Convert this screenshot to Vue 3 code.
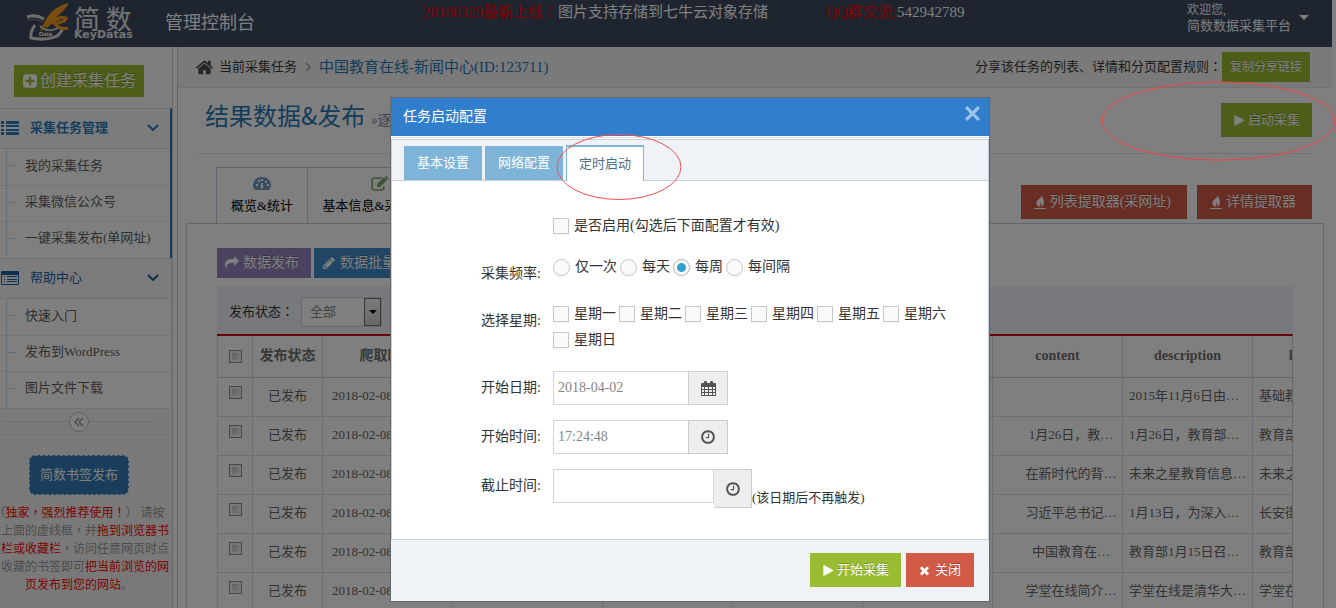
<script setup>
import { ref } from 'vue'

const PLAY = 'M1576 927l-1328 738q-23 13-39.5 3t-16.5-36v-1472q0-26 16.5-36t39.5 3l1328 738q23 13 23 31t-23 31z'
const PLUS = 'M1408 960v-128q0-26-19-45t-45-19h-320v-320q0-26-19-45t-45-19h-128q-26 0-45 19t-19 45v320h-320q-26 0-45 19t-19 45v128q0 26 19 45t45 19h320v320q0 26 19 45t45 19h128q26 0 45-19t19-45v-320h320q26 0 45-19t19-45zm256-544v960q0 119-84.5 203.5t-203.5 84.5h-960q-119 0-203.5-84.5t-84.5-203.5v-960q0-119 84.5-203.5t203.5-84.5h960q119 0 203.5 84.5t84.5 203.5z'
const TIMES = 'M1490 1322q0 40-28 68l-136 136q-28 28-68 28t-68-28l-294-294-294 294q-28 28-68 28t-68-28l-136-136q-28-28-28-68t28-68l294-294-294-294q-28-28-28-68t28-68l136-136q28-28 68-28t68 28l294 294 294-294q28-28 68-28t68 28l136 136q28 28 28 68t-28 68l-294 294 294 294q28 28 28 68z'
const HOME = 'M1472 992v480q0 26-19 45t-45 19h-384v-384h-256v384h-384q-26 0-45-19t-19-45v-480q0-1 .5-3t.5-3l575-474 575 474q1 2 1 6zm223-69l-62 74q-8 9-21 11h-3q-13 0-21-7l-692-577-692 577q-12 8-24 7-13-2-21-11l-62-74q-8-10-7-23.5t11-21.5l719-599q32-26 76-26t76 26l244 204v-195q0-14 9-23t23-9h192q14 0 23 9t9 23v408l219 182q10 8 11 21.5t-7 23.5z'
const CLOCK = 'M1024 544v448q0 14-9 23t-23 9h-320q-14 0-23-9t-9-23v-64q0-14 9-23t23-9h224v-352q0-14 9-23t23-9h64q14 0 23 9t9 23zm416 352q0-148-73-273t-198-198-273-73-273 73-198 198-73 273 73 273 198 198 273 73 273-73 198-198 73-273zm224 0q0 209-103 385.5t-279.5 279.5-385.5 103-385.5-103-279.5-279.5-103-385.5 103-385.5 279.5-279.5 385.5-103 385.5 103 279.5 279.5 103 385.5z'
const SHARE = 'M1792 640q0 26-19 45l-512 512q-19 19-45 19t-45-19-19-45v-256h-224q-98 0-175.5 6t-154 21.5-133 42.5-105.5 69.5-80 101-48.5 138.5-17.5 181q0 55 5 123 0 6 2.5 23.5t2.5 26.5q0 15-8.5 25t-23.5 10q-16 0-28-17-7-9-13-22t-13.5-30-10.5-24q-127-285-127-451 0-199 53-333 162-403 875-403h224v-256q0-26 19-45t45-19 45 19l512 512q19 19 19 45z'
const PENCIL = 'M491 1536l91-91-235-235-91 91v107h128v128h107zm523-928q0-22-22-22-10 0-17 7l-542 542q-7 7-7 17 0 22 22 22 10 0 17-7l542-542q7-7 7-17zm-54-192l416 416-832 832h-416v-416zm683 96q0 53-37 90l-166 166-416-416 166-165q36-38 90-38 53 0 91 38l235 234q37 39 37 91z'

const menus = [
  { title: '采集任务管理', active: true, items: ['我的采集任务', '采集微信公众号', '一键采集发布(单网址)'] },
  { title: '帮助中心', active: false, items: ['快速入门', '发布到WordPress', '图片文件下载'] }
]

const rows = [
  { content: '', description: '2015年11月6日由…', keywords: '基础教育' },
  { content: '1月26日，教…', description: '1月26日，教育部…', keywords: '教育部' },
  { content: '在新时代的背…', description: '未来之星教育信息…', keywords: '未来之星' },
  { content: '习近平总书记…', description: '1月13日，为深入…', keywords: '长安街' },
  { content: '中国教育在…', description: '教育部1月15日召…', keywords: '教育部' },
  { content: '学堂在线简介…', description: '学堂在线是清华大…', keywords: '学堂在线' }
]

const tabs = ['基本设置', '网络配置', '定时启动']
const activeTab = ref('定时启动')
const frequencies = ['仅一次', '每天', '每周', '每间隔']
const frequency = ref('每周')
const weekdays = ['星期一', '星期二', '星期三', '星期四', '星期五', '星期六', '星期日']
const chosenDays = ref([])
const enabled = ref(false)
const startDate = ref('2018-04-02')
const startTime = ref('17:24:48')
const endTime = ref('')
</script>

<template>
  <div class="page">
    <header class="topbar">
      <a class="brand" href="#">
        <svg class="brand-mark" viewBox="0 0 46 40" aria-hidden="true">
          <path d="M1 14 Q10 11 18 16" fill="none" stroke="#d8d8d8" stroke-width="3" />
          <path d="M1 17 Q10 15 17 19" fill="none" stroke="#8d8d8d" stroke-width="1" />
          <path d="M9 22 Q4 29 5 35 Q20 38 31 33 Q36 29 37 24" fill="none" stroke="#dcdcdc" stroke-width="3" />
          <path d="M14 23 Q22 31 34 24" fill="none" stroke="#cfcfcf" stroke-width="2" />
          <path d="M42 0 Q27 4 21 15 Q16 23 14 29 Q19 24 23 19 Q35 12 42 2 Z" fill="#f79a1d" />
          <path d="M23 19 Q33 13 40 15 Q41 18 29 21 Q34 27 42 25 M20 24 Q26 17 34 16" fill="none" stroke="#f79a1d" stroke-width="3" />
          <text x="13" y="33" class="brand-data">Data</text>
        </svg>
        <span class="brand-words"><b>简 数</b><i>KeyDatas</i></span>
      </a>
      <span class="console">管理控制台</span>
      <p class="notice"><span>20180329最新上线<em class="mark">：</em></span>图片支持存储到七牛云对象存储</p>
      <p class="qq"><span>QQ群交流:</span>542942789</p>
      <button class="user" type="button">
        <span><small>欢迎您,</small>简数数据采集平台</span>
        <i class="caret"></i>
      </button>
    </header>

    <div class="columns">
      <aside class="sidebar">
        <div class="create">
          <button type="button" class="btn green create-btn">
            <svg class="i16" viewBox="0 0 1792 1792"><path :d="PLUS" /></svg>创建采集任务
          </button>
        </div>
        <nav>
          <section v-for="m in menus" :key="m.title" :class="['menu', { open: m.active }]">
            <a class="menu-head" href="#">
              <svg v-if="m.active" class="menu-icon" viewBox="0 0 18 14"><path d="M0 0h3v3H0zM5 0h13v3H5zM0 4h3v2H0zM5 4h13v2H5zM0 8h3v2H0zM5 8h13v2H5zM0 11h3v3H0zM5 11h13v3H5z" /></svg>
              <svg v-else class="menu-icon" viewBox="0 0 18 14"><path fill-rule="evenodd" d="M1 0h16q1 0 1 1v12q0 1-1 1H1q-1 0-1-1V1q0-1 1-1zM1 4v9h16V4zM3 5h1v1H3zM6 5h10v1H6zM3 8h1v1H3zM6 8h10v1H6zM3 10h1v1H3zM6 10h10v1H6z" /></svg>
              <span>{{ m.title }}</span>
              <svg class="angle" viewBox="0 0 12 8"><path d="M1 1l5 5 5-5" fill="none" stroke="currentColor" stroke-width="2" /></svg>
            </a>
            <ul>
              <li v-for="item in m.items" :key="item"><a href="#">{{ item }}</a></li>
            </ul>
          </section>
        </nav>
        <div class="collapse">
          <button type="button" aria-label="收起菜单">
            <svg viewBox="0 0 10 10"><path d="M5 1L1 5l4 4M9 1L5 5l4 4" fill="none" stroke="#999" stroke-width="1.5" /></svg>
          </button>
        </div>
        <a class="bookmark" href="#">简数书签发布</a>
        <p class="tip">（<b>独家<em class="mark">，</em>强烈推荐使用<em class="mark">！</em></b>） 请按住上面的虚线框<em class="mark">，</em>并<b>拖到浏览器书签栏或收藏栏</b><em class="mark">，</em>访问任意网页时点击收藏的书签即可<b>把当前浏览的网页发布到您的网站</b>。</p>
      </aside>

      <main class="main">
        <div class="crumbs">
          <svg class="home" viewBox="0 0 1792 1792"><path :d="HOME" /></svg>
          <span>当前采集任务</span>
          <svg class="crumb-sep" viewBox="0 0 6 8"><path d="M1 0l4 4-4 4" fill="none" stroke="#999" stroke-width="1.5" /></svg>
          <a href="#">中国教育在线-新闻中心(ID:123711)</a>
          <span class="share-label">分享该任务的列表、详情和分页配置规则<em class="mark">：</em></span>
          <button type="button" class="btn green share-btn">复制分享链接</button>
        </div>

        <div class="title-row">
          <h1>结果数据&amp;发布 <small>»逐条查看</small></h1>
          <button type="button" class="btn green start-btn">
            <svg class="i13" viewBox="0 0 1792 1792"><path :d="PLAY" /></svg>启动采集
          </button>
        </div>

        <div class="tab-row">
          <a class="page-tab" href="#">
            <svg viewBox="0 0 18 14"><path fill="#7399c2" fill-rule="evenodd" d="M2 13Q0 11 0 8Q1 0 9 0t9 8q0 3-2 5zM3 7v2h2V7zM5 3v2h2V3zM8 2v2h2V2zM12 4v2h2V4zM14 7v2h2V7zM8 6L8 9Q7 10 8 11t2 0q1-1 0-2L10 6z" /></svg>
            概览&amp;统计
          </a>
          <a class="page-tab wide" href="#">
            <svg viewBox="0 0 18 14"><path d="M11 1H4Q1 1 1 4v6q0 3 3 3h6q3 0 3-3V9" fill="none" stroke="#74a562" stroke-width="1.5" /><path fill="#74a562" d="M6 10V7l7-7 3 3-7 7zM14 0l1-1 3 3-1 1z" /></svg>
            基本信息&amp;采集配置
          </a>
          <div class="extract">
            <button type="button" class="btn red">
              <svg class="fire" viewBox="0 0 12 14"><path d="M7 0Q8 2 5 4Q1 7 3 10q1 2 3 2Q5 10 7 8q1 2 0 4q3-1 3-5Q10 3 7 0zM0 13h12v1H0z" /></svg>列表提取器(采网址)
            </button>
            <button type="button" class="btn red">
              <svg class="fire" viewBox="0 0 12 14"><path d="M7 0Q8 2 5 4Q1 7 3 10q1 2 3 2Q5 10 7 8q1 2 0 4q3-1 3-5Q10 3 7 0zM0 13h12v1H0z" /></svg>详情提取器
            </button>
          </div>
        </div>

        <section class="panel">
          <div class="actions">
            <button type="button" class="btn purple"><svg class="i14" viewBox="0 0 1792 1792"><path :d="SHARE" /></svg>数据发布</button>
            <button type="button" class="btn blue"><svg class="i14" viewBox="0 0 1792 1792"><path :d="PENCIL" /></svg>数据批量修改</button>
          </div>
          <div class="filter">
            <label for="state">发布状态<em class="mark">：</em></label>
            <span class="select">
              <select id="state"><option>全部</option></select>
              <i><svg viewBox="0 0 8 4"><path d="M0 0h8L4 4z" /></svg></i>
            </span>
          </div>
          <div class="table-wrap">
            <table>
              <colgroup><col class="c-check"><col class="c-state"><col class="c-std"><col class="c-wide"><col class="c-std" span="6"></colgroup>
              <thead>
                <tr>
                  <th><input type="checkbox" class="old-check" aria-label="全选"></th>
                  <th>发布状态</th><th>爬取时间</th><th></th><th></th><th></th><th></th>
                  <th>content</th><th>description</th><th>keywords</th>
                </tr>
              </thead>
              <tbody>
                <tr v-for="(r, i) in rows" :key="i">
                  <td class="pick"><input type="checkbox" class="old-check" :aria-label="'选择第' + (i + 1) + '行'"></td>
                  <td class="mid">已发布</td><td class="date">2018-02-08</td><td></td><td></td><td></td><td></td>
                  <td class="content">{{ r.content }}</td><td>{{ r.description }}</td><td>{{ r.keywords }}</td>
                </tr>
              </tbody>
            </table>
          </div>
        </section>
      </main>
    </div>

    <div class="backdrop">
      <div class="dialog" role="dialog" aria-labelledby="dialog-title">
        <div class="dialog-head">
          <h2 id="dialog-title">任务启动配置</h2>
          <button type="button" aria-label="关闭窗口"><svg viewBox="0 0 14 14"><path d="M1 1l12 12M13 1L1 13" fill="none" stroke="currentColor" stroke-width="3" /></svg></button>
        </div>
        <div class="dialog-tabs">
          <button v-for="t in tabs" :key="t" type="button" :class="{ active: t === activeTab }" @click="activeTab = t">
            {{ t }}
            <svg v-if="t === '定时启动'" class="ring-tab" viewBox="0 0 126 68"><ellipse cx="63" cy="34" rx="62" ry="32.5" fill="none" stroke="#f25050" /></svg>
          </button>
        </div>
        <form class="dialog-body" @submit.prevent>
          <div class="row enable">
            <label class="opt"><input v-model="enabled" type="checkbox">是否启用(勾选后下面配置才有效)</label>
          </div>
          <fieldset class="row freq">
            <legend>采集频率:</legend>
            <div class="opts">
              <label v-for="f in frequencies" :key="f" class="opt"><input v-model="frequency" type="radio" name="frequency" :value="f">{{ f }}</label>
            </div>
          </fieldset>
          <fieldset class="row week">
            <legend>选择星期:</legend>
            <div class="opts">
              <label v-for="d in weekdays" :key="d" class="opt"><input v-model="chosenDays" type="checkbox" :value="d">{{ d }}</label>
            </div>
          </fieldset>
          <div class="row field">
            <label for="start-date">开始日期:</label>
            <input id="start-date" v-model="startDate" type="text">
            <button type="button" class="addon" aria-label="选择日期">
              <svg class="cal" viewBox="0 0 15 15"><path fill-rule="evenodd" d="M1 2h2V1q0-1 1-1h1q1 0 1 1v1h3V1q0-1 1-1h1q1 0 1 1v1h2q1 0 1 1v11q0 1-1 1H1q-1 0-1-1V3q0-1 1-1zM1 6v2h2V6zM4 6v2h3V6zM8 6v2h3V6zM12 6v2h2V6zM1 9v2h2V9zM4 9v2h3V9zM8 9v2h3V9zM12 9v2h2V9zM1 12v2h2v-2zM4 12v2h3v-2zM8 12v2h3v-2zM12 12v2h2v-2z" /></svg>
            </button>
          </div>
          <div class="row field">
            <label for="start-time">开始时间:</label>
            <input id="start-time" v-model="startTime" type="text">
            <button type="button" class="addon" aria-label="选择时间"><svg class="i16" viewBox="0 0 1792 1792"><path :d="CLOCK" /></svg></button>
          </div>
          <div class="row field end">
            <label for="end-time">截止时间:</label>
            <input id="end-time" v-model="endTime" type="text">
            <button type="button" class="addon" aria-label="选择截止时间"><svg class="i16" viewBox="0 0 1792 1792"><path :d="CLOCK" /></svg></button>
            <span class="hint">(该日期后不再触发)</span>
          </div>
        </form>
        <div class="dialog-foot">
          <button type="button" class="btn green"><svg class="i13" viewBox="0 0 1792 1792"><path :d="PLAY" /></svg>开始采集</button>
          <button type="button" class="btn red close"><svg class="i13" viewBox="0 0 1792 1792"><path :d="TIMES" /></svg>关闭</button>
        </div>
      </div>
      <svg class="ring-start" viewBox="0 0 235 80"><ellipse cx="117.5" cy="40" rx="116.5" ry="39" fill="none" stroke="#f24444" /></svg>
    </div>
  </div>
</template>

<style>
body {
  margin: 0;
  background: #fff;
}
</style>

<style scoped>
.page,
.page * {
  box-sizing: border-box;
}
.page {
  height: 100vh;
  overflow: hidden;
  display: flex;
  flex-direction: column;
  padding-right: 4px;
  color: #393939;
  font: 13px/20px "Liberation Serif", "Noto Sans CJK SC", serif;
  text-spacing-trim: space-all;
}
.page button,
.page input,
.page select {
  font: inherit;
  margin: 0;
}
.page p,
.page ul,
.page h1,
.page h2 {
  margin: 0;
  padding: 0;
}
a {
  text-decoration: none;
  color: inherit;
}
svg {
  fill: currentColor;
  flex: none;
}
.mark {
  font-family: "Noto Sans CJK TC", sans-serif;
  font-style: normal;
  line-height: 1;
}
.i13 { width: 13px; height: 13px; }
.i14 { width: 14px; height: 14px; }
.i16 { width: 16px; height: 16px; }

.btn {
  display: inline-flex;
  align-items: center;
  justify-content: center;
  gap: 2px;
  border: 0;
  padding: 0 12px;
  height: 34px;
  color: #fff;
  white-space: nowrap;
  text-shadow: 0 -1px 0 rgba(0, 0, 0, .25);
}
.page .green { background: #9abc32; }
.page .red { background: #d15b47; }
.page .purple { background: #9585bf; }
.page .blue { background: #428bca; }

/* top bar */
.topbar {
  flex: none;
  height: 47px;
  display: flex;
  background: #3c4a5e;
  color: #fff;
  font-size: 15px;
}
.brand {
  display: flex;
  margin-left: 26px;
  width: 139px;
}
.brand-mark {
  width: 46px;
  height: 40px;
  margin-top: 3px;
}
.brand-data {
  font: bold 6px "Liberation Sans", sans-serif;
  fill: #fff;
}
.brand-words {
  display: flex;
  flex-direction: column;
  margin: 6px 0 0 2px;
}
.brand-words b {
  font: 26px/24px "Noto Sans CJK SC", sans-serif;
  color: #e6e6e6;
  white-space: nowrap;
}
.brand-words i {
  font: bold 11px/10px "DejaVu Sans", sans-serif;
  color: #e6e6e6;
}
.console {
  font-size: 18px;
  line-height: 46px;
}
.page .notice {
  margin-left: 168px;
  line-height: 24px;
}
.page .qq {
  margin-left: 58px;
  line-height: 24px;
}
.notice span,
.qq span {
  color: #f00;
}
.user {
  display: flex;
  align-items: center;
  gap: 8px;
  border: 0;
  background: none;
  color: #fff;
  text-align: left;
  padding: 0;
}
.page .user {
  margin: 0 23px 12px auto;
  font-size: 13px;
  line-height: 16px;
}
.user small {
  display: block;
  font-size: 12px;
}
.caret {
  border: 5px solid transparent;
  border-top-color: #fff;
  border-bottom: 0;
}

.columns {
  flex: 1;
  display: flex;
  min-height: 0;
}

/* sidebar */
.sidebar {
  flex: 0 0 173px;
  background: #f2f2f2;
  border-right: 1px solid #ccc;
  overflow: hidden;
}
.create {
  height: 61px;
  padding: 18px 14px;
  background: #fafafa;
  width: 172px;
}
.page .create-btn {
  width: 130px;
  height: 32px;
  font-size: 16px;
  padding: 0;
  gap: 2px;
}
.menu {
  border-top: 1px solid #e0e0e0;
  border-right: 2px solid #f2f2f2;
}
.menu.open {
  border-right-color: #2b7dbc;
}
.menu-head {
  display: flex;
  align-items: center;
  height: 39px;
  padding: 0 11px 1px 1px;
  background: #f9f9f9;
  color: #1f62a3;
}
.menu.open .menu-head {
  color: #2b7dbc;
  font-weight: bold;
}
.menu-icon {
  width: 18px;
  height: 14px;
}
.menu-head span {
  margin-left: 11px;
}
.angle {
  width: 12px;
  height: 8px;
  margin-left: auto;
}
.page .menu ul {
  list-style: none;
  position: relative;
  border-top: 1px solid #e0e0e0;
  background: #fff;
  padding-bottom: 1px;
}
.menu ul::before {
  content: "";
  position: absolute;
  left: 6px;
  top: 0;
  bottom: 0;
  border-left: 1px dotted #9dbdd6;
}
.menu li {
  display: flex;
  align-items: center;
  height: 36px;
  padding-bottom: 3px;
}
.menu li + li {
  border-top: 1px dotted #dedede;
}
.menu li::before {
  content: "";
  width: 7px;
  margin: 0 10px 0 8px;
  border-top: 1px dotted #9dbdd6;
}
.menu li a {
  color: #616161;
}
.collapse {
  height: 27px;
  border: 1px solid #e0e0e0;
  border-width: 1px 0;
  background: #f5f5f5;
  margin-right: 2px;
  display: flex;
  align-items: center;
  padding: 0 15px 0 3px;
}
.collapse::before,
.collapse::after {
  content: "";
  flex: 1;
  border-top: 1px solid #d6d6d6;
}
.collapse button {
  width: 20px;
  height: 20px;
  border: 1px solid #bbb;
  border-radius: 50%;
  background: #fff;
  display: grid;
  place-items: center;
  padding: 0;
}
.collapse svg {
  width: 10px;
  height: 10px;
}
.bookmark {
  display: block;
  width: 100px;
  margin: 20px 0 9px 29px;
  border: 1px dashed #d0e4f4;
  border-radius: 6px;
  background: #337ab7;
  color: #fff;
  text-align: center;
  line-height: 38px;
}
.page .tip {
  margin: 0 2px 0 -12px;
  font-size: 12px;
  line-height: 18px;
  text-align: center;
  color: #999;
}
.tip b {
  color: #f00;
  font-weight: normal;
}

/* main */
.main {
  flex: 1;
  min-width: 0;
  margin-left: 4px;
  border-left: 1px solid #ccc;
  background: #fff;
}
.crumbs {
  height: 41px;
  display: flex;
  align-items: center;
  background: #f5f5f5;
  border-bottom: 1px solid #e5e5e5;
  padding: 0 22px 0 17px;
}
.home {
  width: 19px;
  height: 19px;
  margin-right: 5px;
  color: #4c4c4c;
}
.crumb-sep {
  width: 6px;
  height: 8px;
  margin: 0 8px;
}
.crumbs a {
  font-size: 15px;
  color: #2679b5;
}
.share-label {
  margin-left: auto;
}
.page .share-btn {
  height: 30px;
  padding: 0 8px;
  font-size: 12px;
}
.title-row {
  display: flex;
  justify-content: space-between;
  align-items: flex-start;
  margin: 0 20px 0 21px;
  padding: 15px 0 0 6px;
  height: 66px;
  border-bottom: 1px dotted #ccc;
}
h1 {
  font: 24px/24px "Noto Sans CJK SC", sans-serif;
  color: #2679b5;
}
h1 small {
  font-size: 14px;
  color: #8089a0;
}
.tab-row {
  display: flex;
  height: 69px;
  padding: 13px 20px 0 38px;
}
.page-tab {
  display: flex;
  flex-direction: column;
  align-items: center;
  width: 92px;
  padding-top: 9px;
  gap: 5px;
  border: 1px solid #c5d0dc;
  border-width: 1px 1px 0;
  color: #000;
  white-space: nowrap;
}
.page-tab.wide {
  width: 145px;
  margin-left: -1px;
}
.page-tab svg {
  width: 18px;
  height: 14px;
  overflow: visible;
}
.extract {
  margin-left: auto;
  display: flex;
  gap: 10px;
  padding-top: 18px;
}
.page .extract .btn {
  font-size: 14px;
  padding: 0 16px 0 13px;
  gap: 4px;
}
.fire {
  width: 12px;
  height: 14px;
}
.panel {
  margin: 0 8px;
  border: 1px solid #c5d0dc;
  padding: 24px 30px;
}
.actions {
  display: flex;
  gap: 3px;
}
.page .actions .btn {
  height: 30px;
  padding: 0 8px;
  font-size: 14px;
  gap: 4px;
}
.page .actions .purple {
  padding-right: 12px;
}
.filter {
  display: flex;
  align-items: center;
  height: 48px;
  margin-top: 8px;
  padding: 4px 12px 0;
  background: #eff3f8;
}
.select {
  position: relative;
  margin-left: 7px;
}
.filter select {
  appearance: none;
  display: block;
  width: 81px;
  height: 30px;
  padding: 0 8px;
  border: 1px solid #d5d5d5;
  border-radius: 0;
  background: #fff;
  color: #858585;
}
.select i {
  position: absolute;
  top: 1px;
  right: 1px;
  width: 17px;
  height: 28px;
  border: 1px solid #707070;
  background: linear-gradient(#f4f4f4, #d0d0d0);
  display: grid;
  place-items: center;
  pointer-events: none;
}
.select svg {
  width: 8px;
  height: 4px;
  fill: #000;
}
.table-wrap {
  overflow: hidden;
  border-top: 2px solid #c00;
  border-right: 1px solid #ccc;
}
table {
  table-layout: fixed;
  width: 1166px;
  border-collapse: collapse;
}
.c-check { width: 35px; }
.c-state { width: 70px; }
.c-std { width: 130px; }
.c-wide { width: 150px; }
th,
td {
  border: 1px solid #dadde8;
  padding: 0 6px;
  height: 39px;
  text-align: left;
  white-space: nowrap;
  overflow: hidden;
}
th {
  height: 41px;
  border-top: 0;
  border-bottom-color: #ccc;
  text-align: center;
  font-size: 14px;
  padding: 0;
  color: #707070;
}
td {
  color: #666;
  padding-bottom: 1px;
}
td.mid {
  text-align: center;
  padding: 0 0 1px;
}
td.pick {
  vertical-align: top;
  padding: 8px 0 0;
}
td.date {
  padding-left: 9px;
}
td.content {
  text-align: center;
  padding: 0 4px 1px 31px;
}
.old-check {
  appearance: none;
  display: block;
  width: 13px;
  height: 13px;
  border: 1px solid #8e8f8f;
  background: linear-gradient(135deg, #b5b9be, #f4f4f4);
  box-shadow: inset 0 0 0 2px #f0f0f0;
}
.page .old-check {
  margin: 0 auto;
}

/* dialog */
.backdrop {
  position: fixed;
  inset: 0;
  display: flex;
  justify-content: center;
  align-items: flex-start;
  padding: 97px 0 0 44px;
  background: rgba(0, 0, 0, .5);
}
.dialog {
  width: 600px;
  border: 1px solid #666;
  background: #fff;
}
.dialog-head {
  display: flex;
  align-items: center;
  justify-content: space-between;
  height: 38px;
  padding: 0 9px 0 12px;
  background: #307ecc;
  color: #fff;
}
h2 {
  font-size: 14px;
  font-weight: normal;
}
.dialog-head button {
  border: 0;
  background: none;
  padding: 0;
  height: 24px;
  color: #9cc4ea;
}
.dialog-head svg {
  display: block;
  width: 15px;
  height: 15px;
  margin-bottom: 8px;
}
.dialog-tabs {
  display: flex;
  gap: 3px;
  height: 42px;
  margin-top: 3px;
  padding: 6px 12px 0;
  background: #eff3f8;
  border: 1px solid #c5d0dc;
  box-shadow: 0 -2px 0 -1px #fff, 0 -3px 0 -1px #e0e0e0;
}
.dialog-tabs button {
  position: relative;
  width: 78px;
  height: 34px;
  padding: 0;
  border: 0;
  background: #7db4d8;
  color: #fff;
}
.page .dialog-tabs .active {
  height: 36px;
  margin-top: -1px;
  border: 1px solid #7db4d8;
  border-width: 2px 1px 0;
  background: #fff;
  color: #4c6f8c;
}
.ring-tab {
  position: absolute;
  left: -11px;
  top: -14px;
  width: 126px;
  height: 68px;
  pointer-events: none;
}
.dialog-body {
  height: 359px;
  padding: 32px 20px 0 70px;
  border: 1px solid #c5d0dc;
  border-top: 0;
  font-size: 14px;
  color: #333;
}
.row {
  display: flex;
  align-items: flex-start;
  border: 0;
  margin: 0;
  padding: 0;
  min-width: 0;
}
.enable {
  padding-left: 91px;
}
legend,
.field label {
  width: 79px;
  text-align: right;
  padding: 0;
}
legend {
  float: left;
}
.opts {
  flex: 1;
  display: flex;
  flex-wrap: wrap;
  gap: 0 3px;
  margin-left: 12px;
}
.opt {
  display: flex;
  align-items: center;
  gap: 5px;
  height: 26px;
  white-space: nowrap;
}
.opt input {
  appearance: none;
  width: 16px;
  height: 16px;
  border: 1px solid #c8c8c8;
  background: #fafafa;
  box-shadow: 0 1px 2px rgba(0, 0, 0, .05);
}
.opt input[type="radio"] {
  width: 17px;
  height: 17px;
  border-radius: 50%;
}
.opt input[type="radio"]:checked {
  border-color: #adb8c0;
  background: radial-gradient(circle, #32a3ce 0 4px, #fafafa 5px);
}
.opt input[type="checkbox"]:checked {
  background: #32a3ce;
}
.freq {
  margin-top: 15px;
}
.freq legend,
.week legend {
  padding-top: 10px;
}
.week {
  margin-top: 17px;
}
.field {
  margin-top: 15px;
}
.week + .field {
  margin-top: 18px;
}
.field label {
  line-height: 34px;
}
.field input {
  width: 136px;
  height: 34px;
  padding: 0 4px 1px;
  border: 1px solid #d5d5d5;
  border-radius: 0;
  background: #fff;
  color: #858585;
}
.page .field input {
  margin-left: 12px;
}
.addon {
  width: 40px;
  height: 34px;
  border: 1px solid #ccc;
  background: #eee;
  color: #555;
  display: grid;
  place-items: center;
  padding: 0;
}
.page .addon {
  margin-left: -1px;
}
.cal {
  width: 15px;
  height: 15px;
}
.field.end {
  height: 39px;
}
.end input {
  width: 161px;
}
.page .end .addon {
  width: 38px;
  height: 39px;
  margin-left: 0;
  border-left: 0;
}
.hint {
  align-self: flex-end;
  font-size: 13px;
}
.dialog-foot {
  display: flex;
  justify-content: flex-end;
  gap: 5px;
  height: 61px;
  padding: 13px 15px;
  background: #eff3f8;
}
.page .dialog-foot .close {
  padding: 0 13px 0 12px;
  gap: 4px;
}
.ring-start {
  position: absolute;
  right: 0;
  top: 81px;
  width: 235px;
  height: 80px;
}
</style>
